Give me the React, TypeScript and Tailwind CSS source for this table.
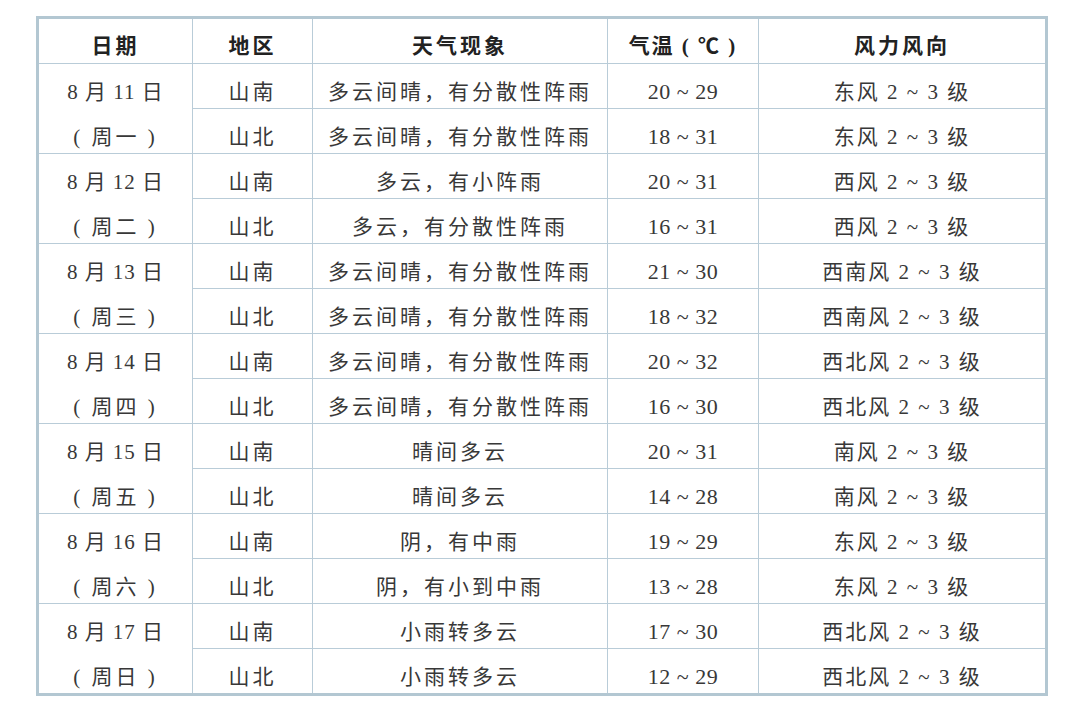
import React from "react";

type Row = { area: string; weather: string; temp: string; wind: string };
type Day = { date: string; week: string; rows: Row[] };

const days: Day[] = [
  { date: "8 月 11 日", week: "( 周一 )", rows: [
    { area: "山南", weather: "多云间晴，有分散性阵雨", temp: "20 ~ 29", wind: "东风 2 ~ 3 级" },
    { area: "山北", weather: "多云间晴，有分散性阵雨", temp: "18 ~ 31", wind: "东风 2 ~ 3 级" },
  ]},
  { date: "8 月 12 日", week: "( 周二 )", rows: [
    { area: "山南", weather: "多云，有小阵雨", temp: "20 ~ 31", wind: "西风 2 ~ 3 级" },
    { area: "山北", weather: "多云，有分散性阵雨", temp: "16 ~ 31", wind: "西风 2 ~ 3 级" },
  ]},
  { date: "8 月 13 日", week: "( 周三 )", rows: [
    { area: "山南", weather: "多云间晴，有分散性阵雨", temp: "21 ~ 30", wind: "西南风 2 ~ 3 级" },
    { area: "山北", weather: "多云间晴，有分散性阵雨", temp: "18 ~ 32", wind: "西南风 2 ~ 3 级" },
  ]},
  { date: "8 月 14 日", week: "( 周四 )", rows: [
    { area: "山南", weather: "多云间晴，有分散性阵雨", temp: "20 ~ 32", wind: "西北风 2 ~ 3 级" },
    { area: "山北", weather: "多云间晴，有分散性阵雨", temp: "16 ~ 30", wind: "西北风 2 ~ 3 级" },
  ]},
  { date: "8 月 15 日", week: "( 周五 )", rows: [
    { area: "山南", weather: "晴间多云", temp: "20 ~ 31", wind: "南风 2 ~ 3 级" },
    { area: "山北", weather: "晴间多云", temp: "14 ~ 28", wind: "南风 2 ~ 3 级" },
  ]},
  { date: "8 月 16 日", week: "( 周六 )", rows: [
    { area: "山南", weather: "阴，有中雨", temp: "19 ~ 29", wind: "东风 2 ~ 3 级" },
    { area: "山北", weather: "阴，有小到中雨", temp: "13 ~ 28", wind: "东风 2 ~ 3 级" },
  ]},
  { date: "8 月 17 日", week: "( 周日 )", rows: [
    { area: "山南", weather: "小雨转多云", temp: "17 ~ 30", wind: "西北风 2 ~ 3 级" },
    { area: "山北", weather: "小雨转多云", temp: "12 ~ 29", wind: "西北风 2 ~ 3 级" },
  ]},
];

const font = { fontFamily: '"Liberation Serif", "Noto Sans CJK SC", serif' };

export default function App() {
  return (
    <div className="w-[1080px] h-[711px] bg-white overflow-hidden pt-[16px] pl-[36px]" style={font}>
      <div className="w-[1012px] border-[3px] border-[#b3c7d2] text-[#383838] text-[21px] leading-none">
        <div className="flex h-[45px] border-b border-[#b9ccd8] font-semibold text-[#222]">
          <div className="w-[154px] border-r border-[#b9ccd8] flex items-center justify-center pt-[10px] tracking-[3px]">日期</div>
          <div className="w-[120px] border-r border-[#b9ccd8] flex items-center justify-center pt-[10px] tracking-[3px]">地区</div>
          <div className="w-[295px] border-r border-[#b9ccd8] flex items-center justify-center pt-[10px] tracking-[3px]">天气现象</div>
          <div className="w-[151px] border-r border-[#b9ccd8] flex items-center justify-center pt-[10px] tracking-[2px]">气温 ( ℃ )</div>
          <div className="flex-1 flex items-center justify-center pt-[10px] tracking-[3px]">风力风向</div>
        </div>
        {days.map((d, i) => (
          <div key={d.date} className={"flex " + (i < days.length - 1 ? "border-b border-[#b9ccd8]" : "")}>
            <div className="w-[154px] border-r border-[#b9ccd8] flex flex-col">
              <div className="h-[45px] flex items-center justify-center pt-[12px] tracking-[1px]">{d.date}</div>
              <div className="h-[44px] flex items-center justify-center pt-[12px] tracking-[3px]">{d.week}</div>
            </div>
            <div className="flex-1 flex flex-col">
              {d.rows.map((r, j) => (
                <div key={j} className={"flex " + (j === 0 ? "h-[45px] border-b border-[#b9ccd8]" : "h-[44px]")}>
                  <div className="w-[120px] border-r border-[#b9ccd8] flex items-center justify-center pt-[12px] tracking-[3px]">{r.area}</div>
                  <div className="w-[295px] border-r border-[#b9ccd8] flex items-center justify-center pt-[12px] tracking-[3px]">{r.weather}</div>
                  <div className="w-[151px] border-r border-[#b9ccd8] flex items-center justify-center pt-[12px] text-[22px] tracking-[0.5px]">{r.temp}</div>
                  <div className="flex-1 flex items-center justify-center pt-[12px] tracking-[2px]">{r.wind}</div>
                </div>
              ))}
            </div>
          </div>
        ))}
      </div>
    </div>
  );
}
